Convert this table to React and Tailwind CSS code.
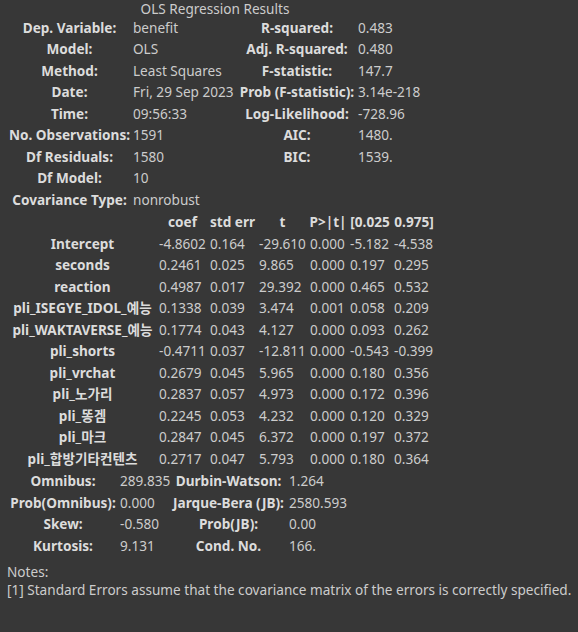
import React from "react";

const top = [
  ["Dep. Variable:", "benefit", "R-squared:", "0.483"],
  ["Model:", "OLS", "Adj. R-squared:", "0.480"],
  ["Method:", "Least Squares", "F-statistic:", "147.7"],
  ["Date:", "Fri, 29 Sep 2023", "Prob (F-statistic):", "3.14e-218"],
  ["Time:", "09:56:33", "Log-Likelihood:", "-728.96"],
  ["No. Observations:", "1591", "AIC:", "1480."],
  ["Df Residuals:", "1580", "BIC:", "1539."],
  ["Df Model:", "10", "", ""],
  ["Covariance Type:", "nonrobust", "", ""],
];

const coefs = [
  ["Intercept", "-4.8602", "0.164", "-29.610", "0.000", "-5.182", "-4.538"],
  ["seconds", "0.2461", "0.025", "9.865", "0.000", "0.197", "0.295"],
  ["reaction", "0.4987", "0.017", "29.392", "0.000", "0.465", "0.532"],
  ["pli_ISEGYE_IDOL_예능", "0.1338", "0.039", "3.474", "0.001", "0.058", "0.209"],
  ["pli_WAKTAVERSE_예능", "0.1774", "0.043", "4.127", "0.000", "0.093", "0.262"],
  ["pli_shorts", "-0.4711", "0.037", "-12.811", "0.000", "-0.543", "-0.399"],
  ["pli_vrchat", "0.2679", "0.045", "5.965", "0.000", "0.180", "0.356"],
  ["pli_노가리", "0.2837", "0.057", "4.973", "0.000", "0.172", "0.396"],
  ["pli_똥겜", "0.2245", "0.053", "4.232", "0.000", "0.120", "0.329"],
  ["pli_마크", "0.2847", "0.045", "6.372", "0.000", "0.197", "0.372"],
  ["pli_합방기타컨텐츠", "0.2717", "0.047", "5.793", "0.000", "0.180", "0.364"],
];

const diag = [
  ["Omnibus:", "289.835", "Durbin-Watson:", "1.264"],
  ["Prob(Omnibus):", "0.000", "Jarque-Bera (JB):", "2580.593"],
  ["Skew:", "-0.580", "Prob(JB):", "0.00"],
  ["Kurtosis:", "9.131", "Cond. No.", "166."],
];

const th = "h-[21.5px] p-0 text-center font-bold text-[#dcdcdc] whitespace-nowrap";
const td = "h-[21.5px] p-0 pl-[2px] text-left whitespace-nowrap";

function Colgroup({ widths }) {
  return (
    <colgroup>
      {widths.map((w, i) => (
        <col key={i} style={{ width: w }} />
      ))}
    </colgroup>
  );
}

export default function App() {
  return (
    <div
      className="w-[578px] h-[632px] bg-[#373737] text-[#cccccc] text-[13.6px] leading-[16px] overflow-hidden"
      style={{ fontFamily: '"Noto Sans", "Noto Sans CJK KR", sans-serif' }}
    >
      {/* Model summary */}
      <table className="table-fixed border-collapse ml-[8px] w-[414px]">
        <caption className="h-[17px] leading-[17px] text-center">OLS Regression Results</caption>
        <Colgroup widths={[123, 107, 118, 66]} />
        <tbody>
          {top.map((r, i) => (
            <tr key={i}>
              <th className={th}>{r[0]}</th>
              <td className={td}>{r[1]}</td>
              <th className={th}>{r[2]}</th>
              <td className={td}>{r[3]}</td>
            </tr>
          ))}
        </tbody>
      </table>

      {/* Coefficients */}
      <table className="table-fixed border-collapse ml-[8px] mt-[1px] w-[428px]">
        <Colgroup widths={[149, 51, 49, 51, 40, 44, 44]} />
        <thead>
          <tr>
            <th className={th}></th>
            <th className={th}>coef</th>
            <th className={th}>std err</th>
            <th className={th}>t</th>
            <th className={th}>P&gt;|t|</th>
            <th className={th}>[0.025</th>
            <th className={th}>0.975]</th>
          </tr>
        </thead>
        <tbody>
          {coefs.map((r, i) => (
            <tr key={i}>
              <th className={th}>{r[0]}</th>
              {r.slice(1).map((v, j) => (
                <td key={j} className={td}>{v}</td>
              ))}
            </tr>
          ))}
        </tbody>
      </table>

      {/* Diagnostics */}
      <table className="table-fixed border-collapse ml-[8px] mt-[1px] w-[340px]">
        <Colgroup widths={[110, 52, 117, 61]} />
        <tbody>
          {diag.map((r, i) => (
            <tr key={i}>
              <th className={th}>{r[0]}</th>
              <td className={td}>{r[1]}</td>
              <th className={th}>{r[2]}</th>
              <td className={td}>{r[3]}</td>
            </tr>
          ))}
        </tbody>
      </table>

      <div className="pl-[7px] mt-[6px] leading-[18px]">
        <div>Notes:</div>
        <div className="whitespace-nowrap">
          [1] Standard Errors assume that the covariance matrix of the errors is correctly specified.
        </div>
      </div>
    </div>
  );
}
